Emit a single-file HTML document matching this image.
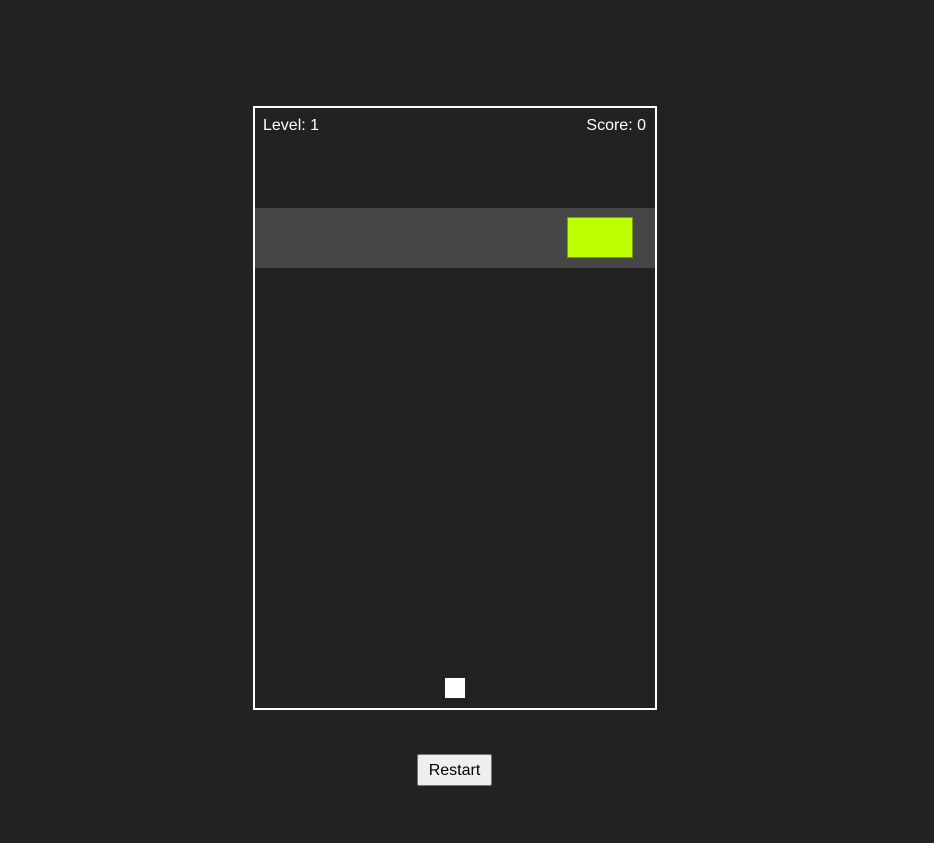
<!DOCTYPE html>
<html><head><style>
body{margin:0;background:#222;width:934px;height:843px;position:relative;font-family:"Liberation Sans",Arial,sans-serif;}
#g{position:absolute;left:253px;top:106px;width:400px;height:600px;border:2px solid #fff;overflow:hidden}
.t{position:absolute;top:9px;color:#fff;font-size:16px}
#band{position:absolute;left:0;top:100px;width:400px;height:60px;background:#464646}
#blk{position:absolute;left:312px;top:9px;width:64px;height:39px;background:#bbff00;border:1px solid #7a9a10}
#p{position:absolute;left:190px;top:570px;width:20px;height:20px;background:#fff}
button{position:absolute;left:417px;top:754px;width:75px;height:32px;background:#efefef;border:1px solid #767676;border-radius:2px;font:16px "Liberation Sans",Arial,sans-serif;color:#000;padding:2px 0 0 0}
</style></head><body>
<div id="g">
<div class="t" style="left:8px">Level: 1</div>
<div class="t" style="right:9px">Score: 0</div>
<div id="band"><div id="blk"></div></div>
<div id="p"></div>
</div>
<button>Restart</button>
</body></html>
